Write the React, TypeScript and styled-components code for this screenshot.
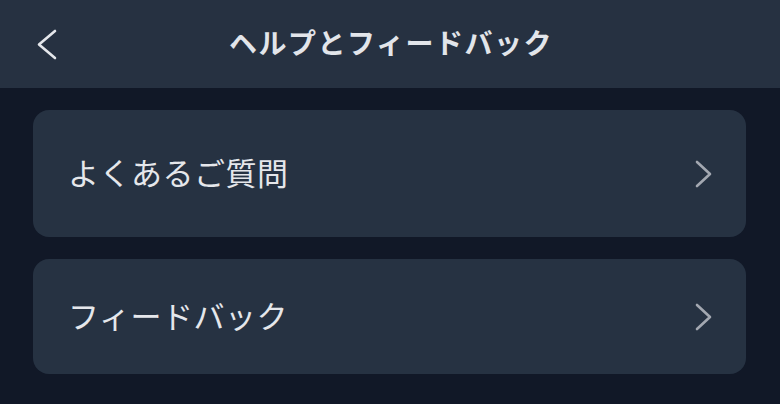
import React from 'react';
import styled, { createGlobalStyle } from 'styled-components';

const GlobalStyle = createGlobalStyle`
    html, body {
        margin: 0;
        padding: 0;
        background-color: #111827;
    }
    body {
        font-family: "Noto Sans CJK JP", "Noto Sans", sans-serif;
    }
`;

type MenuItem = {
    id: number;
    label: string;
    height: number;
};

const items: MenuItem[] = [
    { id: 1, label: "よくあるご質問", height: 127 },
    { id: 2, label: "フィードバック", height: 115 },
];

const Page = styled.div`
    width: 780px;
    height: 404px;
    background-color: #111827;
    overflow: hidden;
`;

const Header = styled.header`
    height: 88px;
    background-color: #263141;
    display: grid;
    grid-template-columns: 80px 1fr 80px;
    align-items: center;
`;

const BackButton = styled.button`
    background: none;
    border: none;
    padding: 0 0 0 37px;
    height: 40px;
    display: flex;
    align-items: center;
    cursor: pointer;
`;

const Title = styled.h1`
    margin: 0;
    text-align: center;
    font-size: 28px;
    font-weight: 700;
    color: #e2e5ea;
    letter-spacing: 1.5px;
    padding: 0 0 4px 2px;
`;

const List = styled.div`
    display: flex;
    flex-direction: column;
    gap: 22px;
    padding: 22px 34px 0 33px;
`;

const Card = styled.div<{ $h: number }>`
    height: ${p => p.$h}px;
    background-color: #263242;
    border-radius: 16px;
    display: flex;
    align-items: center;
    justify-content: space-between;
    padding: 0 34px 0 35px;
    cursor: pointer;
`;

const Label = styled.span`
    font-size: 31px;
    color: #e5e7eb;
    letter-spacing: 0.5px;
    padding-bottom: 5px;
`;

const Chevron: React.FC<{ dir: 'left' | 'right'; color: string; w: number; h: number }> = ({ dir, color, w, h }) => (
    <svg width={w} height={h} viewBox={`0 0 ${w} ${h}`} fill="none">
        <polyline
            points={dir === 'left'
                ? `${w - 2},2 2,${h / 2} ${w - 2},${h - 2}`
                : `2,2 ${w - 2},${h / 2} 2,${h - 2}`}
            stroke={color}
            strokeWidth={2.6}
            strokeLinecap="round"
            strokeLinejoin="round"
        />
    </svg>
);

const App: React.FC = () => {
    return (
        <Page>
            <GlobalStyle />
            <Header>
                <BackButton aria-label="戻る">
                    <Chevron dir="left" color="#e5e7eb" w={20} h={31} />
                </BackButton>
                <Title>ヘルプとフィードバック</Title>
                <div />
            </Header>
            <List>
                {items.map(item => (
                    <Card key={item.id} $h={item.height}>
                        <Label>{item.label}</Label>
                        <Chevron dir="right" color="#a3a8b1" w={17} h={28} />
                    </Card>
                ))}
            </List>
        </Page>
    );
};

export default App;
